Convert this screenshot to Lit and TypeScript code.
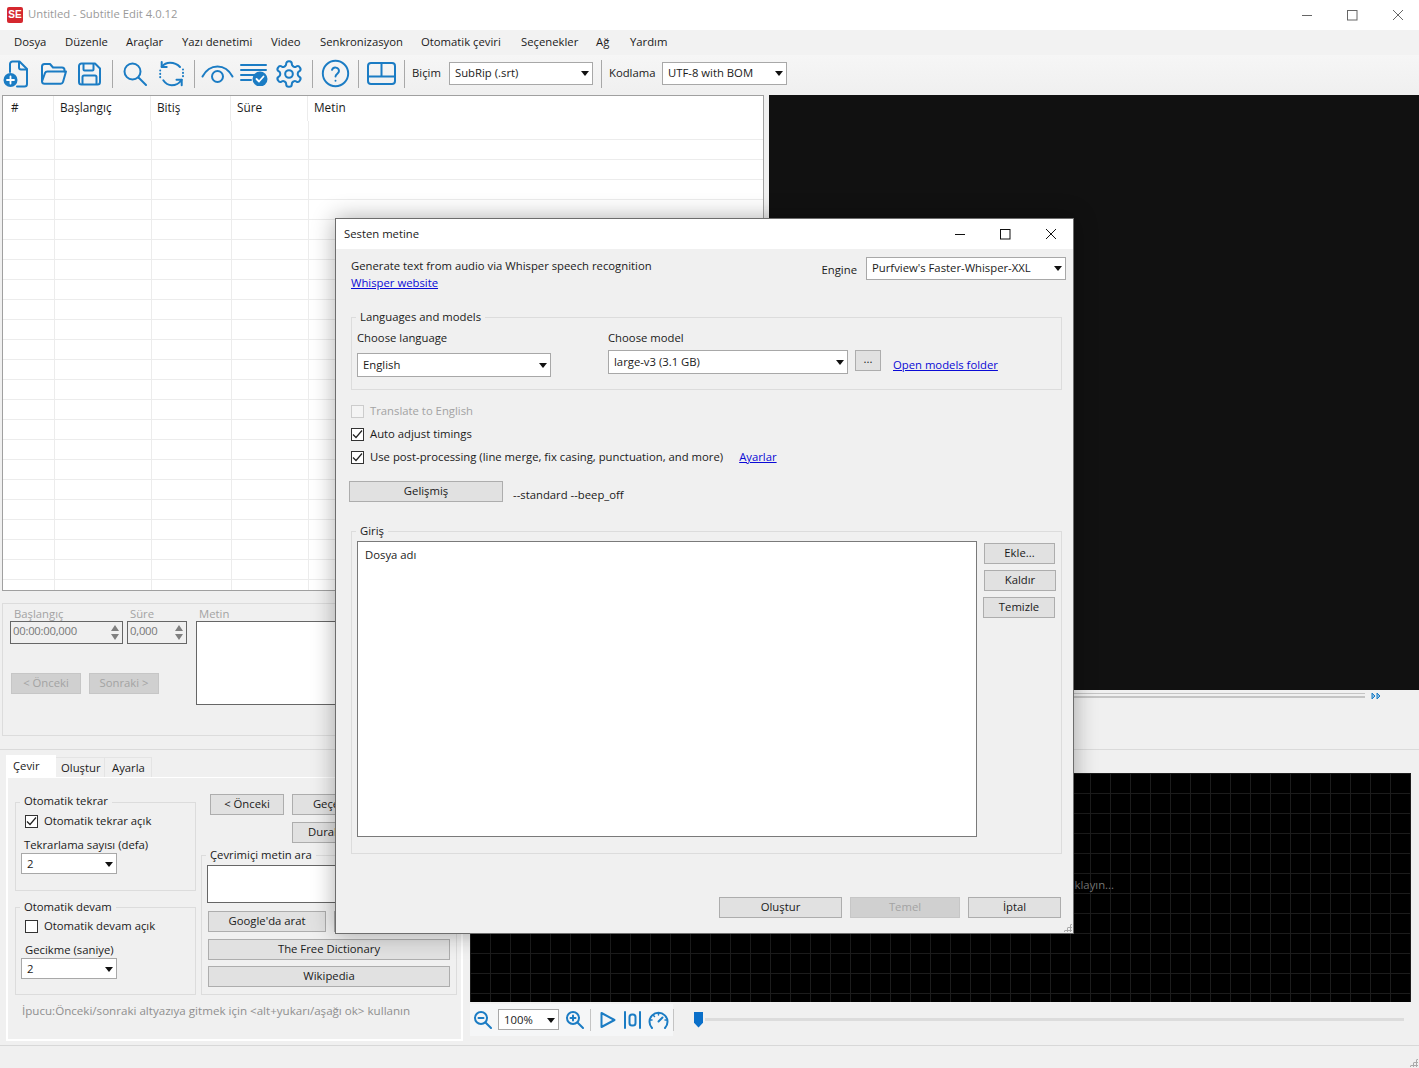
import { LitElement, css, html, svg } from "lit";
import { customElement } from "lit/decorators.js";

const BLUE = "#1b7cc4";

const icon = (w: number, h: number, body: unknown) => html`
  <svg class="icon" width=${w} height=${h} viewBox="0 0 ${w} ${h}" fill="none"
    stroke=${BLUE} stroke-width="2" stroke-linecap="round" stroke-linejoin="round">${body}</svg>
`;

const gearPath =
  "M12.22 2h-.44a2 2 0 0 0-2 2v.18a2 2 0 0 1-1 1.73l-.43.25a2 2 0 0 1-2 0l-.15-.08a2 2 0 0 0-2.73.73l-.22.38a2 2 0 0 0 .73 2.73l.15.1a2 2 0 0 1 1 1.72v.51a2 2 0 0 1-1 1.74l-.15.09a2 2 0 0 0-.73 2.73l.22.38a2 2 0 0 0 2.73.73l.15-.08a2 2 0 0 1 2 0l.43.25a2 2 0 0 1 1 1.73V20a2 2 0 0 0 2 2h.44a2 2 0 0 0 2-2v-.18a2 2 0 0 1 1-1.73l.43-.25a2 2 0 0 1 2 0l.15.08a2 2 0 0 0 2.73-.73l.22-.39a2 2 0 0 0-.73-2.73l-.15-.08a2 2 0 0 1-1-1.74v-.5a2 2 0 0 1 1-1.74l.15-.09a2 2 0 0 0 .73-2.73l-.22-.38a2 2 0 0 0-2.73-.73l-.15.08a2 2 0 0 1-2 0l-.43-.25a2 2 0 0 1-1-1.73V4a2 2 0 0 0-2-2z";

const icons = {
  newFile: icon(25, 28, svg`
    <path d="M7 12V4a2.500 2.500 0 0 1 2.500-2.500h7L24 9v15a2.500 2.500 0 0 1-2.500 2.500H14"/>
    <path d="M16 2v5.500a2 2 0 0 0 2 2h5.500"/>
    <circle cx="7.500" cy="20" r="7" fill=${BLUE} stroke="none"/>
    <path d="M7.500 16.500v7M4 20h7" stroke="#fff" stroke-width="1.800"/>`),
  open: icon(27, 24, svg`
    <path d="M2 19V4.500A2.500 2.500 0 0 1 4.500 2h5.500l3 3.500h9a2.500 2.500 0 0 1 2.500 2.500v1.500"/>
    <path d="M2 19.500 5 11a2.500 2.500 0 0 1 2.300-1.500H26l-3 10.500a2.500 2.500 0 0 1-2.300 1.800H4.500A2.500 2.500 0 0 1 2 19.500z"/>`),
  save: icon(23, 24, svg`
    <path d="M3.500 1.500h13.500l5 5v13.500a2.500 2.500 0 0 1-2.500 2.500h-16A2.500 2.500 0 0 1 1 20V4a2.500 2.500 0 0 1 2.500-2.500z"/>
    <path d="M5.500 2v5.500a1 1 0 0 0 1 1h8a1 1 0 0 0 1-1V2"/>
    <path d="M4.500 22v-7a1.500 1.500 0 0 1 1.500-1.500h11a1.500 1.500 0 0 1 1.500 1.500v7"/>`),
  search: icon(24, 24, svg`<circle cx="9.500" cy="9.500" r="8"/><path d="M15.500 15.500 23 23"/>`),
  sync: icon(25, 26, svg`
    <path d="M2.700 5.800C5 3 8 1.700 11 1.700c4 0 7.500 1.500 10 4.300"/>
    <path d="M2.700 1v5h5"/>
    <path d="M4.300 19.300c2 3 5 5 8.400 5 4 0 7.500-2 10-5.600"/>
    <path d="M22.700 24.300v-5.600h-5.200"/>
    <path d="M1.200 9.500v7M24 8.500v7.500" stroke-dasharray="0.100 3.200"/>`),
  eye: icon(33, 20, svg`
    <path d="M1.500 12.500C5 6 10 2.500 16.500 2.500S28 6 31.500 12.500"/>
    <circle cx="16.500" cy="12.500" r="5.500"/>`),
  lines: icon(28, 24, svg`
    <path d="M1 3h25M1 8h25M1 13h15M1 18h10"/>
    <circle cx="20" cy="17" r="7.500" fill=${BLUE} stroke="none"/>
    <path d="m16.500 17 2.500 2.500 4.500-5" stroke="#fff" stroke-width="1.800"/>`),
  gear: html`<svg class="icon" width="28" height="28" viewBox="1 1 22 22" fill="none" stroke=${BLUE}
    stroke-width="1.600" stroke-linecap="round" stroke-linejoin="round">
    <path d=${gearPath}/><circle cx="12" cy="12" r="3"/></svg>`,
  help: html`<svg class="icon" width="29" height="29" viewBox="0 0 24 24" fill="none" stroke=${BLUE}
    stroke-width="1.600" stroke-linecap="round" stroke-linejoin="round">
    <circle cx="12" cy="12" r="10.500"/><path d="M9.100 9a3 3 0 0 1 5.800 1c0 2-2.900 2.300-2.900 4.500"/><path d="M12 18h.01"/></svg>`,
  layout: icon(29, 23, svg`
    <rect x="1" y="1" width="27" height="21" rx="3"/><path d="M1 14.500h27M14.500 1v13.500"/>`),
  zoomOut: icon(18, 18, svg`<circle cx="7" cy="7" r="6"/><path d="m11.500 11.500 5.500 5.500M4.500 7h5"/>`),
  zoomIn: icon(18, 18, svg`<circle cx="7" cy="7" r="6"/><path d="m11.500 11.500 5.500 5.500M4.500 7h5M7 4.500v5"/>`),
  play: icon(16, 18, svg`<path d="M1.500 2v14L14.500 9z"/>`),
  center: icon(17, 18, svg`<path d="M1 1v16M16 1v16"/><rect x="5.500" y="3.500" width="6" height="11" rx="2.500"/>`),
  gauge: icon(21, 18, svg`
    <path d="M4 17A9 9 0 1 1 17 17"/><path d="m10.500 10.500 4-4"/>
    <path d="M2.500 9h1.500M10.500 2.500v1.500M17 9h1.500M5.500 4.500l1 1" stroke-width="1.500"/>`),
};

const check = (on: boolean, disabled = false) => html`
  <span class="box ${disabled ? "off" : ""}">
    ${on
      ? html`<svg width="11" height="11" viewBox="0 0 11 11" fill="none" stroke="#222" stroke-width="1.200"><path d="m1 5.500 3 3 6-7"/></svg>`
      : ""}
  </span>
`;

const combo = (text: string, cls: string) => html`<div class="combo ${cls}"><span>${text}</span><i></i></div>`;

const winButtons = (color: string) => html`
  <div class="wm">
    <svg width="12" height="12" viewBox="0 0 12 12" stroke=${color} fill="none"><path d="M2 6.500h10"/></svg>
    <svg width="12" height="12" viewBox="0 0 12 12" stroke=${color} fill="none"><rect x="1.500" y="1.500" width="9.500" height="9.500"/></svg>
    <svg width="12" height="12" viewBox="0 0 12 12" stroke=${color} fill="none"><path d="m1 1 10 10M11 1 1 11"/></svg>
  </div>
`;

// shared by the main window and the dialog, they live in separate shadow roots
const controls = css`
  .wm { display: flex; gap: 34px; }
  .group { border: 1px solid #dcdcdc; box-sizing: border-box; }
  .legend {
    width: fit-content;
    margin: -9px 0 0 4px;
    padding: 0 4px 1px;
    background: #f0f0f0;
    line-height: 16px;
  }
  .chk { display: flex; align-items: center; height: 16px; }
  .chk span:not(.box) { margin-left: 6px; }
  .box {
    width: 13px;
    height: 13px;
    box-sizing: border-box;
    border: 1px solid #333;
    background: #fff;
    display: flex;
    align-items: center;
    justify-content: center;
    flex: none;
  }
  .box.off { border-color: #ccc; background: #f4f4f4; }
  button {
    height: 21px;
    box-sizing: border-box;
    border: 1px solid #adadad;
    background: #e1e1e1;
    font: inherit;
    color: #1a1a1a;
    padding: 0 0 2px;
  }
  button[disabled] { color: #a3a3a3; background: #d0d0d0; border-color: #c6c6c6; }
  .combo {
    box-sizing: border-box;
    height: 23px;
    border: 1px solid #a8a8a8;
    background: #fff;
    display: flex;
    align-items: center;
    justify-content: space-between;
    padding: 0 3px 1px 5px;
    flex: none;
  }
  .combo i {
    width: 0;
    height: 0;
    margin-top: 1px;
    border: 4.5px solid transparent;
    border-top: 5.5px solid #111;
    border-bottom: 0;
  }
  .grip {
    position: absolute;
    right: 1px;
    bottom: 1px;
    width: 9px;
    height: 9px;
    background: radial-gradient(circle, #aaa 1px, transparent 1.1px) 0 0 / 3px 3px;
    clip-path: polygon(100% 0, 100% 100%, 0 100%);
  }
`;

@customElement("app-dialog")
export class AppDialog extends LitElement {
  render() {
    return html`
      <header>
        <span>Sesten metine</span>
        ${winButtons("#111")}
      </header>
      <div class="body">
        <div class="intro">
          <div>
            <div class="t">Generate text from audio via Whisper speech recognition</div>
            <a>Whisper website</a>
          </div>
          <div class="engine">
            <span>Engine</span>
            ${combo("Purfview's Faster-Whisper-XXL", "w-engine")}
          </div>
        </div>

        <section class="group models">
          <div class="legend">Languages and models</div>
          <div class="model-row">
            <div class="col lang">
              <label>Choose language</label>
              ${combo("English", "w-lang")}
            </div>
            <div class="col">
              <label>Choose model</label>
              <div class="model-pick">
                ${combo("large-v3 (3.1 GB)", "w-model")}
                <button class="dots">...</button>
                <a>Open models folder</a>
              </div>
            </div>
          </div>
        </section>

        <div class="checks">
          <div class="chk dis">${check(false, true)}<span>Translate to English</span></div>
          <div class="chk">${check(true)}<span>Auto adjust timings</span></div>
          <div class="chk">${check(true)}<span>Use post-processing (line merge, fix casing, punctuation, and more)</span><a>Ayarlar</a></div>
        </div>

        <div class="advanced">
          <button class="w-adv">Gelişmiş</button>
          <span>--standard --beep_off</span>
        </div>

        <section class="group input">
          <div class="legend">Giriş</div>
          <div class="input-row">
            <div class="list">Dosya adı</div>
            <div class="side">
              <button>Ekle...</button>
              <button>Kaldır</button>
              <button>Temizle</button>
            </div>
          </div>
        </section>

        <footer>
          <button class="w-create">Oluştur</button>
          <button class="w-temel" disabled>Temel</button>
          <button class="w-cancel">İptal</button>
        </footer>
      </div>
      <div class="grip"></div>
    `;
  }

  static styles = [
    controls,
    css`
      :host {
        position: absolute;
        left: 335px;
        top: 218px;
        width: 739px;
        height: 716px;
        box-sizing: border-box;
        border: 1px solid #6d6d6d;
        background: #f0f0f0;
        box-shadow: 0 0 22px rgba(0, 0, 0, 0.32);
        font: var(--ui-size) / 16px var(--ui-font);
        color: #1a1a1a;
      }
      header {
        height: 30px;
        background: #fff;
        display: flex;
        align-items: center;
        justify-content: space-between;
        padding: 0 16px 1px 8px;
        box-sizing: border-box;
      }
      .body { padding: 8px 11px 0 15px; }
      a { color: #0a0ad6; text-decoration: underline; }
      .intro { display: flex; justify-content: space-between; height: 60px; }
      .t { line-height: 16px; padding-top: 1px; }
      .intro a { display: block; line-height: 17px; }
      .engine { display: flex; gap: 9px; height: 24px; margin-right: -4px; }
      .engine span { padding-top: 5px; }
      .engine .combo span { padding-top: 0; }
      .models { height: 73px; }
      .model-row { display: flex; padding-left: 5px; }
      .col label { display: block; height: 20px; margin-top: 4px; }
      .lang { width: 251px; }
      .lang .combo { margin-top: 3px; height: 24px; }
      .model-pick { display: flex; align-items: flex-start; }
      .w-model { height: 24px; }
      .dots { width: 26px; height: 21px; margin-left: 7px; padding-bottom: 4px; }
      .model-pick a { margin: 7px 0 0 12px; }
      .checks { margin-top: 13px; display: flex; flex-direction: column; gap: 7px; }
      .chk a { margin-left: 16px; }
      .dis { color: #a3a3a3; }
      .advanced { display: flex; gap: 10px; margin: 16px 0 0 -2px; align-items: center; height: 21px; }
      .advanced span { padding-top: 6px; }
      .w-adv { width: 154px; }
      .input { height: 323px; margin-top: 29px; }
      .input-row { display: flex; margin-top: 1px; padding-left: 5px; }
      .list {
        width: 620px;
        height: 296px;
        box-sizing: border-box;
        border: 1px solid #7a7a7a;
        background: #fff;
        padding: 5px 7px;
      }
      .side { display: flex; flex-direction: column; gap: 6px; margin: 2px 0 0 7px; }
      .side button { width: 71px; }
      .side button:nth-child(2) { width: 72px; }
      .side button:nth-child(3) { width: 72px; margin-left: -1px; }
      footer { display: flex; justify-content: flex-end; gap: 8px; margin: 43px 1px 0 0; }
      .w-create { width: 123px; }
      .w-temel { width: 110px; }
      .w-cancel { width: 93px; }
      .w-engine { width: 200px; padding-bottom: 2px; }
      .w-lang { width: 194px; }
      .w-model { width: 240px; }
    `,
  ];
}

@customElement("app-root")
export class AppRoot extends LitElement {
  render() {
    return html`
      <div class="window">
        <div class="titlebar">
          <span class="logo">SE</span>
          <span class="title">Untitled - Subtitle Edit 4.0.12</span>
          ${winButtons("#666")}
        </div>

        <nav class="menu">
          ${[
            ["Dosya", 51], ["Düzenle", 61], ["Araçlar", 56], ["Yazı denetimi", 89], ["Video", 49],
            ["Senkronizasyon", 101], ["Otomatik çeviri", 100], ["Seçenekler", 75], ["Ağ", 34], ["Yardım", 60],
          ].map(([t, w]) => html`<span style="width:${w}px">${t}</span>`)}
        </nav>

        <div class="toolbar">
          ${icons.newFile}
          <span class="g12">${icons.open}</span>
          <span class="g11">${icons.save}</span>
          <i class="sep s1"></i>
          ${icons.search}
          <span class="g12">${icons.sync}</span>
          <i class="sep s2"></i>
          ${icons.eye}
          <span class="g6">${icons.lines}</span>
          <span class="g7">${icons.gear}</span>
          <i class="sep s3"></i>
          ${icons.help}
          <i class="sep s4"></i>
          ${icons.layout}
          <i class="sep s5"></i>
          <span class="lbl l-format">Biçim</span>
          ${combo("SubRip (.srt)", "w-format")}
          <i class="sep s6"></i>
          <span class="lbl l-enc">Kodlama</span>
          ${combo("UTF-8 with BOM", "w-enc")}
        </div>

        <div class="upper">
          <div class="left">
            <div class="table">
              <div class="thead">
                <span class="c1">#</span><span class="c2">Başlangıç</span><span class="c3">Bitiş</span><span class="c4">Süre</span><span>Metin</span>
              </div>
              <div class="tbody"></div>
            </div>
            <div class="edit">
              <div class="labels"><span class="l1">Başlangıç</span><span class="l2">Süre</span><span>Metin</span></div>
              <div class="edit-row">
                <div class="edit-fields">
                  <div class="spins">
                    <div class="spin w-time"><span>00:00:00,000</span>
                      <svg width="8" height="15" viewBox="0 0 8 15" fill="#808080"><path d="M4 0 8 6H0zM0 9h8l-4 6z"/></svg>
                    </div>
                    <div class="spin w-dur"><span>0,000</span>
                      <svg width="8" height="15" viewBox="0 0 8 15" fill="#808080"><path d="M4 0 8 6H0zM0 9h8l-4 6z"/></svg>
                    </div>
                  </div>
                  <div class="nav">
                    <button disabled>&lt; Önceki</button>
                    <button disabled>Sonraki &gt;</button>
                  </div>
                </div>
                <div class="text-box"></div>
              </div>
            </div>
          </div>
          <div class="right">
            <div class="video"></div>
            <div class="seek">
              <div class="track"></div>
              <svg width="10" height="8" viewBox="0 0 10 8" fill="#8cc0e6" stroke=${BLUE}><path d="M1 1v6l3-3zM6 1v6l3-3z"/></svg>
            </div>
          </div>
        </div>

        <div class="lower">
          <div class="tabs-area">
            <div class="tabs">
              <span class="tab active">Çevir</span><span class="tab t2">Oluştur</span><span class="tab t3">Ayarla</span>
            </div>
            <div class="pane">
              <div class="pane-cols">
                <div class="pane-left">
                  <section class="group g-repeat">
                    <div class="legend">Otomatik tekrar</div>
                    <div class="chk">${check(true)}<span>Otomatik tekrar açık</span></div>
                    <label>Tekrarlama sayısı (defa)</label>
                    ${combo("2", "w-num")}
                  </section>
                  <section class="group g-cont">
                    <div class="legend">Otomatik devam</div>
                    <div class="chk">${check(false)}<span>Otomatik devam açık</span></div>
                    <label>Gecikme (saniye)</label>
                    ${combo("2", "w-num")}
                  </section>
                </div>
                <div class="pane-right">
                  <div class="btn-row">
                    <button class="w-prev">&lt; Önceki</button>
                    <button class="w-play">Geçerli satırı oynat</button>
                  </div>
                  <div class="btn-row stop"><button class="w-stop">Durak</button></div>
                  <section class="group g-search">
                    <div class="legend">Çevrimiçi metin ara</div>
                    <div class="search-box"></div>
                    <div class="btn-row g"><button class="w-google">Google'da arat</button><button class="w-google">Google Çeviri</button></div>
                    <button class="wide">The Free Dictionary</button>
                    <button class="wide last">Wikipedia</button>
                  </section>
                </div>
              </div>
              <div class="tip">İpucu:Önceki/sonraki altyazıya gitmek için &lt;alt+yukarı/aşağı ok&gt; kullanın</div>
            </div>
          </div>
          <div class="wave-area">
            <div class="wave"><span>Dalga formu ve ses dosyası eklemek için buraya tıklayın...</span></div>
            <div class="wave-tools">
              <div class="tool-group">
                ${icons.zoomOut}
                ${combo("100%", "w-zoom")}
                ${icons.zoomIn}
                <i class="sep short"></i>
                ${icons.play}
                ${icons.center}
                ${icons.gauge}
              </div>
              <i class="sep short end"></i>
              <div class="slider"><em></em><div class="slide-track"></div></div>
            </div>
          </div>
        </div>

        <div class="status"><div class="grip"></div></div>
      </div>
      <app-dialog></app-dialog>
    `;
  }

  static styles = [
    controls,
    css`
      :host {
        display: block;
        position: relative;
        width: 1419px;
        height: 1068px;
        overflow: hidden;
        --ui-font: "Open Sans", "Noto Sans", sans-serif;
        --ui-size: 11.3px;
        font: var(--ui-size) / 16px var(--ui-font);
        color: #1a1a1a;
      }
      .window { height: 1068px; background: #f0f0f0; display: flex; flex-direction: column; }
      .titlebar { height: 30px; background: #fff; display: flex; align-items: center; flex: none; }
      .logo {
        width: 16px;
        height: 16px;
        margin-left: 7px;
        border-radius: 2px;
        background: #d5282f;
        color: #fff;
        font: bold 10px/16px "Liberation Sans", sans-serif;
        text-align: center;
      }
      .title { margin-left: 5px; padding-bottom: 2px; color: #9a9a9a; }
      .titlebar .wm { margin-left: auto; margin-right: 15px; }
      .menu {
        height: 25px;
        display: flex;
        align-items: center;
        padding: 0 0 2px 14px;
        box-sizing: border-box;
        flex: none;
        background: #f2f2f2;
      }
      .toolbar {
        height: 37px;
        flex: none;
        display: flex;
        align-items: center;
        padding-left: 3px;
        background: linear-gradient(#f6f6f6, #f0f0f0);
      }
      .icon { display: block; flex: none; }
      .g12 { margin-left: 12px; }
      .g11 { margin-left: 11px; }
      .g7 { margin-left: 7px; }
      .g6 { margin-left: 6px; }
      .sep { width: 1px; height: 28px; background: #a8a8a8; flex: none; }
      .s1 { margin: 0 10px 0 11px; }
      .s2 { margin: 0 6px 0 10px; }
      .s3 { margin: 0 8px 0 9px; }
      .s4 { margin: 0 8px 0 8px; }
      .s5 { margin: 0 7px 0 8px; }
      .s6 { margin: 0 7px 0 8px; }
      .lbl { padding-bottom: 2px; }
      .l-format { width: 37px; }
      .l-enc { width: 53px; }
      .w-format { width: 144px; }
      .w-enc { width: 125px; }
      .w-num { width: 96px; height: 21px; padding-bottom: 0; }
      .w-zoom { width: 61px; height: 21px; padding-bottom: 0; }

      .upper {
        height: 658px;
        display: flex;
        flex: none;
        padding-top: 3px;
        box-sizing: border-box;
        border-bottom: 1px solid #dadada;
      }
      .left { width: 769px; flex: none; padding-left: 2px; box-sizing: border-box; }
      .table {
        width: 762px;
        height: 496px;
        box-sizing: border-box;
        border: 1px solid #a0a0a0;
        background: #fff;
      }
      .thead { height: 25px; display: flex; align-items: center; font-size: 11.8px; }
      .thead span { padding-left: 6px; height: 25px; line-height: 23px; box-sizing: border-box; border-right: 1px solid #ececec; }
      .thead span:last-child { border-right: 0; }
      .thead .c1 { width: 51px; padding-left: 8px; }
      .c2 { width: 97px; }
      .c3 { width: 80px; }
      .c4 { width: 77px; }
      .tbody {
        height: 469px;
        background:
          linear-gradient(90deg, #ececec 1px, transparent 1px) 51px 0 / 100% 100% no-repeat,
          linear-gradient(90deg, #ececec 1px, transparent 1px) 148px 0 / 100% 100% no-repeat,
          linear-gradient(90deg, #ececec 1px, transparent 1px) 228px 0 / 100% 100% no-repeat,
          linear-gradient(90deg, #ececec 1px, transparent 1px) 305px 0 / 100% 100% no-repeat,
          linear-gradient(#ececec 1px, transparent 1px) 0 18px / 100% 20px;
      }
      .edit {
        margin-top: 12px;
        width: 762px;
        height: 133px;
        box-sizing: border-box;
        border: 1px solid #dcdcdc;
        padding: 2px 0 0 7px;
        color: #a3a3a3;
      }
      .labels { display: flex; padding-left: 4px; height: 15px; }
      .l1 { width: 116px; }
      .l2 { width: 69px; }
      .edit-row { display: flex; }
      .edit-fields { width: 186px; flex: none; }
      .spins { display: flex; gap: 4px; }
      .spin {
        height: 23px;
        box-sizing: border-box;
        border: 1px solid #666;
        padding: 0 2px 0 2px;
        line-height: 18px;
        letter-spacing: -0.25px;
        color: #777;
        background: #f0f0f0;
        display: flex;
        justify-content: space-between;
        align-items: flex-start;
      }
      .spin svg { margin: 3px 1px 0 0; }
      .w-time { width: 113px; }
      .w-dur { width: 60px; }
      .nav { display: flex; gap: 8px; margin: 29px 0 0 1px; }
      .nav button { width: 70px; }
      .text-box { width: 560px; height: 84px; box-sizing: border-box; border: 1px solid #666; background: #fff; }

      .right { flex: 1; min-width: 0; }
      .video { height: 595px; background: #111; }
      .seek { display: flex; align-items: center; gap: 6px; height: 11px; }
      .track { flex: none; width: 596px; height: 5px; box-sizing: border-box; border: solid #c4c4c4; border-width: 1px 0 2px; }

      .lower { flex: 1; display: flex; min-height: 0; }
      .tabs-area { width: 470px; flex: none; padding: 5px 0 0 6px; box-sizing: border-box; }
      .tabs { display: flex; height: 22px; align-items: flex-end; }
      .tab {
        height: 20px;
        box-sizing: border-box;
        padding: 2px 0 0;
        border: 1px solid #e4e4e4;
        border-bottom: 0;
        border-left: 0;
      }
      .t2 { width: 49px; padding-left: 5px; }
      .t3 { width: 47px; padding-left: 7px; }
      .tab.active { background: #fff; height: 22px; width: 50px; padding: 3px 7px 0; border: 0; }
      .pane {
        width: 457px;
        height: 264px;
        box-sizing: border-box;
        border: solid #fff;
        border-width: 1px 2px 2px;
        padding: 24px 0 0 7px;
      }
      .pane-cols { display: flex; gap: 5px; }
      .pane-left { width: 181px; flex: none; display: flex; flex-direction: column; gap: 16px; }
      .pane-left label { display: block; line-height: 16px; padding-left: 8px; margin-top: 8px; }
      .pane-left .chk { padding-left: 9px; margin-top: 2px; }
      .pane-left .combo { margin-left: 5px; }
      .g-repeat { height: 89px; }
      .g-repeat .legend { margin-top: -10px; padding-bottom: 2px; }
      .g-cont { height: 88px; }
      .g-cont label { padding-left: 9px; }
      .pane-right { width: 256px; margin-top: -8px; }
      .btn-row { display: flex; gap: 8px; padding-left: 9px; }
      .stop { margin-top: 7px; padding-left: 91px; }
      .w-prev { width: 74px; flex: none; }
      .w-play { width: 140px; flex: none; white-space: nowrap; }
      .w-stop { width: 64px; flex: none; }
      .g-search { margin-top: 12px; height: 140px; }
      .search-box { width: 240px; height: 38px; box-sizing: border-box; border: 1px solid #666; background: #fff; margin: 1px 0 0 5px; }
      .btn-row.g { padding-left: 6px; margin-top: 8px; }
      .w-google { width: 118px; flex: none; }
      .wide { display: block; width: 242px; margin: 7px 0 0 6px; }
      .wide.last { margin-top: 6px; }
      .tip { color: #8f8f8f; margin: 8px 0 0 7px; font-size: 11.6px; }

      .wave-area { flex: 1; min-width: 0; padding-top: 23px; }
      .wave {
        width: 941px;
        height: 229px;
        box-sizing: border-box;
        background-color: #000;
        background-image:
          linear-gradient(#1c1c1c 1px, transparent 1px),
          linear-gradient(90deg, #1c1c1c 1px, transparent 1px);
        background-size: 20px 20px;
        color: #777;
        display: flex;
        align-items: center;
        justify-content: flex-end;
        padding: 0 297px 6px 0;
      }
      .wave-tools { display: flex; align-items: center; height: 35px; }
      .tool-group {
        display: flex;
        align-items: center;
        padding-left: 4px;
        height: 32px;
        background: #f5f6f7;
        width: 203px;
        box-sizing: border-box;
        flex: none;
      }
      .tool-group .combo { margin: 0 7px 0 6px; }
      .sep.short { height: 22px; margin: 0 9px 0 6px; background: #c4c4c4; }
      .tool-group > .icon:nth-of-type(3) { margin-right: 8px; }
      .tool-group > .icon:nth-of-type(4) { margin-right: 7px; }
      .sep.short.end { margin: 0 20px 0 0; }
      .slider { display: flex; align-items: center; gap: 2px; }
      .slider em {
        width: 9px;
        height: 16px;
        background: #0a6fc9;
        clip-path: polygon(0 0, 100% 0, 100% 70%, 50% 100%, 0 70%);
      }
      .slide-track { width: 699px; height: 3px; background: #dcdcdc; }
      .status { height: 23px; flex: none; box-sizing: border-box; border-top: 1px solid #d8d8d8; position: relative; }
    `,
  ];
}
